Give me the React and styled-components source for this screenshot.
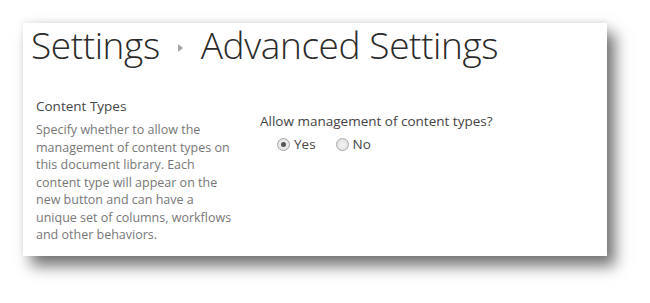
import React from "react";
import styled, { createGlobalStyle } from "styled-components";

const GlobalStyle = createGlobalStyle`
  html, body {
    margin: 0;
    padding: 0;
    background: #ffffff;
  }
  body {
    width: 650px;
    height: 303px;
    overflow: hidden;
    font-family: "Open Sans", "Segoe UI", sans-serif;
  }
`;

const Page = styled.div`
  padding: 23px 43px 47px 23px;
`;

const Panel = styled.div`
  width: 584px;
  height: 233px;
  box-sizing: border-box;
  background: #ffffff;
  padding: 0 0 0 8px;
  box-shadow: 8px 10px 14px rgba(0, 0, 0, 0.55), 0 -2px 6px rgba(0, 0, 0, 0.08);
`;

const Title = styled.h1`
  margin: 0;
  display: flex;
  align-items: center;
  gap: 18px;
  font-family: "Open Sans", sans-serif;
  font-weight: 300;
  font-size: 37px;
  line-height: 44px;
  color: #2a2a2a;
  letter-spacing: -0.4px;
`;

const Crumb = styled.span``;

const Arrow = styled.span`
  width: 0;
  height: 0;
  margin-top: 6px;
  border-top: 4px solid transparent;
  border-bottom: 4px solid transparent;
  border-left: 5px solid #a6a6a6;
`;

const Section = styled.div`
  display: grid;
  grid-template-columns: 229px 1fr;
  margin-top: 30px;
`;

const Info = styled.div`
  padding-left: 5px;
`;

const Heading = styled.h3`
  margin: 0 0 6px;
  font-size: 13.5px;
  font-weight: 400;
  color: #444444;
  line-height: 18px;
`;

const Description = styled.p`
  margin: 0;
  font-size: 12.5px;
  line-height: 17.5px;
  color: #777777;
`;

const Field = styled.div`
  padding-top: 15px;
`;

const Question = styled.div`
  font-size: 13.5px;
  color: #444444;
  line-height: 18px;
`;

const Options = styled.div`
  display: flex;
  gap: 20px;
  padding-left: 17px;
  margin-top: 5px;
`;

const Option = styled.label`
  display: flex;
  align-items: center;
  gap: 4px;
  font-size: 13.5px;
  color: #444444;
`;

const Radio = styled.span`
  width: 11px;
  height: 11px;
  border-radius: 50%;
  border: 1px solid #a8a8a8;
  background: radial-gradient(circle, #f4f4f4 0%, #dcdcdc 100%);
  display: flex;
  align-items: center;
  justify-content: center;

  &::after {
    content: "";
    width: 5px;
    height: 5px;
    border-radius: 50%;
    background: ${(p) => (p.checked ? "#555555" : "transparent")};
  }
`;

const descriptionLines = [
  "Specify whether to allow the",
  "management of content types on",
  "this document library. Each",
  "content type will appear on the",
  "new button and can have a",
  "unique set of columns, workflows",
  "and other behaviors.",
];

const App = () => {
  return (
    <>
      <GlobalStyle />
      <Page>
        <Panel>
          <Title>
            <Crumb>Settings</Crumb>
            <Arrow />
            <Crumb>Advanced Settings</Crumb>
          </Title>
          <Section>
            <Info>
              <Heading>Content Types</Heading>
              <Description>
                {descriptionLines.map((line, i) => (
                  <React.Fragment key={i}>
                    {line}
                    {i < descriptionLines.length - 1 && <br />}
                  </React.Fragment>
                ))}
              </Description>
            </Info>
            <Field>
              <Question>Allow management of content types?</Question>
              <Options>
                <Option>
                  <Radio checked />
                  Yes
                </Option>
                <Option>
                  <Radio />
                  No
                </Option>
              </Options>
            </Field>
          </Section>
        </Panel>
      </Page>
    </>
  );
};

export default App;
